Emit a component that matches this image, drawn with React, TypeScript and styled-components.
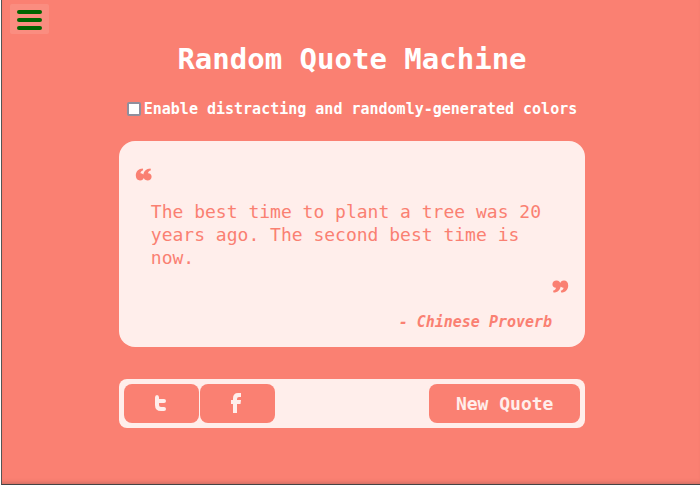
import React, { useState } from "react";
import styled, { createGlobalStyle } from "styled-components";

const coral = "salmon";
const blush = "#ffeeeb";

const GlobalStyle = createGlobalStyle`
  * { box-sizing: border-box; }
  body {
    margin: 0;
    background: #fff;
    font-family: Consolas, "DejaVu Sans Mono", monospace;
  }
`;

const Page = styled.div`
  display: flex;
  flex-direction: column;
  min-height: 100vh;
  margin-left: 1px;
  padding: 4px 0 0 2px;
  border-left: 1px solid #555;
  border-bottom: 1px solid #444;
  background: ${coral};
  box-shadow: inset 0 -4px 4px -3px rgba(80, 60, 60, 0.3);
`;

const MenuButton = styled.button`
  display: flex;
  flex-direction: column;
  align-items: center;
  justify-content: center;
  gap: 4px;
  width: 39px;
  height: 30px;
  margin-left: 6px;
  padding: 2px 0 0;
  border: 0;
  border-radius: 2px;
  background: rgba(255, 255, 255, 0.1);
  cursor: pointer;
`;

const MenuBar = styled.span`
  width: 25px;
  height: 4px;
  border-radius: 2px;
  background: #006400;
`;

const Main = styled.main`
  display: flex;
  flex-direction: column;
  align-items: center;
`;

const Title = styled.h1`
  margin: 7px 0 24px;
  color: #fff;
  font-size: 29px;
  line-height: 36px;
`;

const Option = styled.label`
  display: flex;
  align-items: center;
  gap: 3px;
  margin-bottom: 24px;
  color: #fff;
  font-size: 15px;
  font-weight: bold;
  line-height: 16px;
  white-space: nowrap;
`;

const Check = styled.input`
  appearance: none;
  width: 14px;
  height: 14px;
  margin: 0;
  border: 2px solid #8f8f9d;
  border-radius: 2px;
  background: #fff;
  &:checked { background: #006400; }
`;

const Card = styled.figure`
  display: flex;
  flex-direction: column;
  width: 67%;
  margin: 0 0 32px;
  padding: 27px 16px 16px;
  border-radius: 16px;
  background: ${blush};
  color: ${coral};
`;

const Mark = styled.svg<{ $end?: boolean }>`
  width: 17px;
  height: 13px;
  align-self: ${(p) => (p.$end ? "flex-end" : "flex-start")};
  fill: currentColor;
`;

const QuoteText = styled.blockquote`
  margin: 19px 16px 11px;
  font-size: 18px;
  line-height: 23px;
`;

const Author = styled.figcaption`
  margin: 20px 17px 0 0;
  font-size: 15px;
  font-style: italic;
  font-weight: bold;
  line-height: 18px;
  text-align: right;
`;

const Toolbar = styled.div`
  display: flex;
  gap: 1px;
  width: 67%;
  padding: 5px;
  border-radius: 8px;
  background: ${blush};
`;

const buttonFace = `
  display: flex;
  align-items: center;
  justify-content: center;
  height: 39px;
  border: 0;
  border-radius: 8px;
  background: ${coral};
  color: ${blush};
  cursor: pointer;
`;

const ShareLink = styled.a`
  ${buttonFace}
  width: 75px;
`;

const NewQuoteButton = styled.button`
  ${buttonFace}
  width: 151px;
  margin-left: auto;
  padding: 0;
  font: bold 18px Consolas, "DejaVu Sans Mono", monospace;
  line-height: 23px;
`;

const Glyph = styled.svg`
  width: 15px;
  height: 21px;
  fill: currentColor;
`;

const quotes = [
  {
    text: "The best time to plant a tree was 20 years ago. The second best time is now.",
    author: "Chinese Proverb",
  },
];

const markPath =
  "M7.8 0.5C3.500.5.8 3.500.8 7.600.8 10.800 2.600 12.500 5 12.500 7.400 12.500 9 11 9 8.700 9 6.500 7.600 5.200 5.500 5.200 5.500 3.800 6.400 2.700 8.200 2.200ZM15.500.5C11.200.5 8.300 3.500 8.300 7.600 8.300 10.800 10 12.500 12.500 12.500 14.900 12.500 16.600 11 16.600 8.700 16.600 6.500 15.200 5.200 13.100 5.200 13.100 3.800 14 2.700 16 2.200Z";

export default function App() {
  const [index, setIndex] = useState(0);
  const [distracting, setDistracting] = useState(false);
  const quote = quotes[index];

  return (
    <>
      <GlobalStyle />
      <Page>
        <MenuButton type="button" aria-label="Menu">
          <MenuBar />
          <MenuBar />
          <MenuBar />
        </MenuButton>
        <Main>
          <Title>Random Quote Machine</Title>
          <Option>
            <Check
              type="checkbox"
              checked={distracting}
              onChange={(e) => setDistracting(e.target.checked)}
            />
            Enable distracting and randomly-generated colors
          </Option>
          <Card>
            <Mark viewBox="0 0 17 13" aria-hidden="true">
              <path d={markPath} />
            </Mark>
            <QuoteText>{quote.text}</QuoteText>
            <Mark $end viewBox="0 0 17 13" aria-hidden="true">
              <path d={markPath} transform="rotate(180 8.5 6.5)" />
            </Mark>
            <Author>- {quote.author}</Author>
          </Card>
          <Toolbar>
            <ShareLink href="#twitter" aria-label="Share on Twitter">
              <Glyph viewBox="0 0 15 21" aria-hidden="true">
                <path d="M1 4.500Q1 2 3 2T5 4.500V6H10Q12 6 12 8T10 10H5V12Q5 14 7 14H10Q12 14 12 16T10 18H7Q1 18 1 12Z" />
              </Glyph>
            </ShareLink>
            <ShareLink href="#facebook" aria-label="Share on Facebook">
              <Glyph viewBox="0 0 15 21" aria-hidden="true">
                <path d="M3 20V11H1V7H3V5.500Q3 0 8 0H11V4H9Q7 4 7 6V7H11L10.500 11H7V20Z" />
              </Glyph>
            </ShareLink>
            <NewQuoteButton
              type="button"
              onClick={() => setIndex((index + 1) % quotes.length)}
            >
              New Quote
            </NewQuoteButton>
          </Toolbar>
        </Main>
      </Page>
    </>
  );
}
